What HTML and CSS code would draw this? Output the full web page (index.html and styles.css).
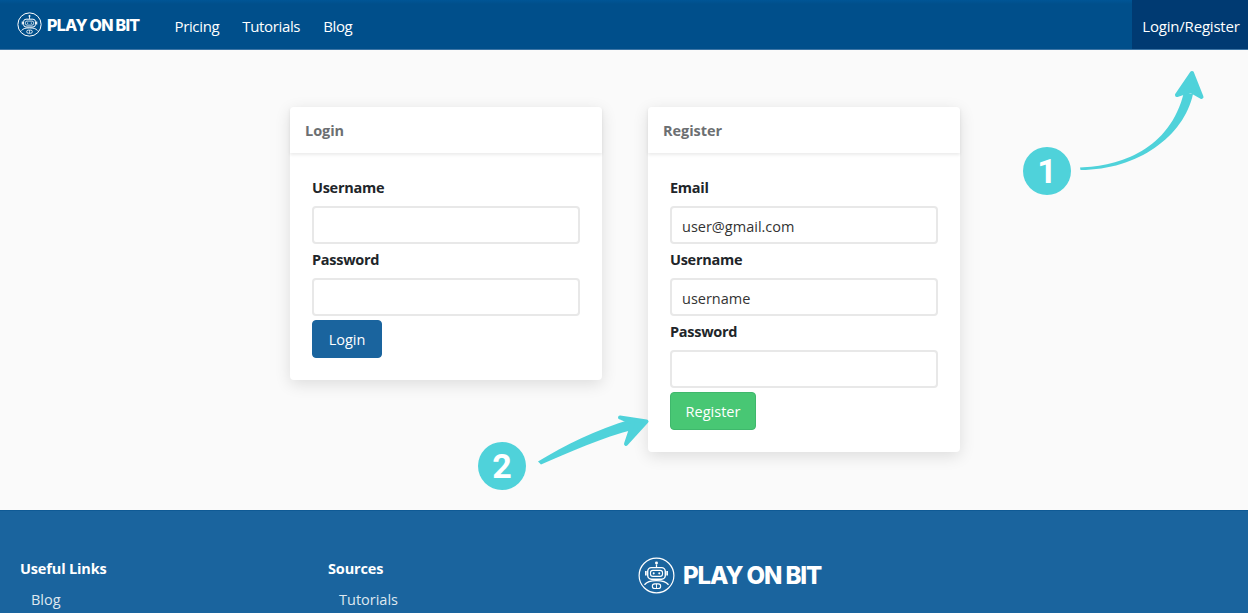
FILE: index.html
```html
<!DOCTYPE html>
<html lang="en">
<head>
<meta charset="utf-8">
<title>Play On Bit</title>
<link rel="stylesheet" href="styles.css">
</head>
<body>
<header class="topbar">
  <a class="brand" href="#">
    <svg class="robot robot-small" viewBox="0 0 40 40" aria-hidden="true">
      <circle cx="20" cy="20" r="18.6" fill="none" stroke="#fff" stroke-width="1.6"/>
      <circle cx="20" cy="6.5" r="1.6" fill="#fff"/>
      <path d="M20 8v3" stroke="#fff" stroke-width="1.4"/>
      <rect x="10.5" y="11.5" width="19" height="12.5" rx="4" fill="none" stroke="#fff" stroke-width="1.6"/>
      <rect x="13.5" y="14.5" width="13" height="6.5" rx="2.5" fill="none" stroke="#fff" stroke-width="1.3"/>
      <circle cx="17" cy="17.7" r="1.1" fill="#fff"/>
      <circle cx="23" cy="17.7" r="1.1" fill="#fff"/>
      <path d="M8.5 15v5M31.5 15v5" stroke="#fff" stroke-width="1.8"/>
      <path d="M7 30c3-4 7-4.5 13-4.5s10 .5 13 4.5" fill="none" stroke="#fff" stroke-width="1.5"/>
      <rect x="15.5" y="29" width="9" height="5" rx="2.5" fill="none" stroke="#fff" stroke-width="1.3"/>
      <path d="M20 29v5" stroke="#fff" stroke-width="1"/>
    </svg>
    <span class="wordmark">PLAY ON BIT</span>
  </a>
  <nav class="nav">
    <a href="#">Pricing</a>
    <a href="#">Tutorials</a>
    <a href="#">Blog</a>
  </nav>
  <a class="account" href="#">Login/Register</a>
</header>

<main class="content">
  <section class="card">
    <h2 class="card-title">Login</h2>
    <form class="card-body">
      <div class="field">
        <label for="login-user">Username</label>
        <input id="login-user" type="text">
      </div>
      <div class="field">
        <label for="login-pass">Password</label>
        <input id="login-pass" type="password">
      </div>
      <button class="btn btn-blue" type="button">Login</button>
    </form>
  </section>

  <section class="card">
    <h2 class="card-title">Register</h2>
    <form class="card-body">
      <div class="field">
        <label for="reg-email">Email</label>
        <input id="reg-email" type="text" value="user@gmail.com">
      </div>
      <div class="field">
        <label for="reg-user">Username</label>
        <input id="reg-user" type="text" value="username">
      </div>
      <div class="field">
        <label for="reg-pass">Password</label>
        <input id="reg-pass" type="password">
      </div>
      <button class="btn btn-green" type="button">Register</button>
    </form>
  </section>
</main>

<footer class="footer">
  <div class="footer-col">
    <h3>Useful Links</h3>
    <a href="#">Blog</a>
  </div>
  <div class="footer-col">
    <h3>Sources</h3>
    <a href="#">Tutorials</a>
  </div>
  <div class="footer-brand">
    <svg class="robot robot-large" viewBox="0 0 40 40" aria-hidden="true">
      <circle cx="20" cy="20" r="18.8" fill="none" stroke="#fff" stroke-width="1.3"/>
      <circle cx="20" cy="6.5" r="1.6" fill="#fff"/>
      <path d="M20 8v3" stroke="#fff" stroke-width="1.4"/>
      <rect x="10.5" y="11.5" width="19" height="12.5" rx="4" fill="none" stroke="#fff" stroke-width="1.5"/>
      <rect x="13.5" y="14.5" width="13" height="6.5" rx="2.5" fill="none" stroke="#fff" stroke-width="1.2"/>
      <circle cx="17" cy="17.7" r="1.1" fill="#fff"/>
      <circle cx="23" cy="17.7" r="1.1" fill="#fff"/>
      <path d="M8.5 15v5M31.5 15v5" stroke="#fff" stroke-width="1.8"/>
      <path d="M7 30c3-4 7-4.5 13-4.5s10 .5 13 4.5" fill="none" stroke="#fff" stroke-width="1.4"/>
      <rect x="15.5" y="29" width="9" height="5" rx="2.5" fill="none" stroke="#fff" stroke-width="1.2"/>
      <path d="M20 29v5" stroke="#fff" stroke-width="1"/>
    </svg>
    <span class="wordmark wordmark-large">PLAY ON BIT</span>
  </div>
</footer>

<svg class="arrows" viewBox="0 0 1248 613" aria-hidden="true">
  <path class="arrow" d="M1080 167.5C1120 166 1170 150 1184 92L1193 94C1184 136 1138 170 1080.5 170Z"/>
  <path class="arrow-head" d="M1192 73L1201.5 97L1190 90.5L1177 95Z"/>
  <path class="arrow" d="M538 461.5C565 445 595 430 632 419L636 429C600 438 570 452 541 464.5Z"/>
  <path class="arrow-head" d="M646.5 421.5L620 417.5L633 423L626 444Z"/>
</svg>
<div class="step step-one">1</div>
<div class="step step-two">2</div>
</body>
</html>
```
FILE: styles.css
```css
* { box-sizing: border-box; }

html, body { margin: 0; height: 100%; }

body {
  position: relative;
  height: 613px;
  overflow: hidden;
  display: flex;
  flex-direction: column;
  background: #fafafa;
  color: #212529;
  font-family: "Open Sans", "Noto Sans", sans-serif;
  font-size: 15px;
}

a { color: inherit; text-decoration: none; }

.topbar {
  flex: none;
  height: 50px;
  display: flex;
  align-items: stretch;
  padding-left: 17px;
  background: linear-gradient(#005596 0, #004f8b 4px);
  border-bottom: 1px solid #3d75a5;
  color: #fff;
}

.brand { display: flex; align-items: center; gap: 5px; }

.robot { display: block; flex: none; }
.robot-small { width: 25px; height: 25px; }
.robot-large { width: 37px; height: 37px; }

.wordmark {
  font-family: Inter, "Liberation Sans", sans-serif;
  font-weight: 800;
  font-size: 16px;
  line-height: 20px;
  letter-spacing: -0.7px;
  color: #fff;
  white-space: nowrap;
}

.wordmark-large { font-size: 24px; line-height: 28px; letter-spacing: -1.1px; }

.nav {
  display: flex;
  align-items: center;
  gap: 23px;
  margin-left: 35px;
  padding-top: 2px;
  font-size: 15px;
  letter-spacing: -0.35px;
}

.account {
  margin-left: auto;
  width: 116px;
  padding: 2px 0 0 2px;
  display: flex;
  align-items: center;
  justify-content: center;
  background: #003a72;
  font-size: 15px;
  letter-spacing: -0.2px;
}

.content {
  flex: none;
  height: 460px;
  display: flex;
  justify-content: center;
  align-items: flex-start;
  gap: 46px;
  padding: 57px 0 0 2px;
}

.card {
  width: 312px;
  background: #fff;
  border-radius: 4px;
  box-shadow: 0 4px 16px rgba(0, 0, 0, 0.12);
}

.card-title {
  margin: 0;
  height: 46px;
  padding: 0 15px;
  display: flex;
  align-items: center;
  font-size: 14.5px;
  font-weight: 700;
  letter-spacing: -0.05px;
  color: #6c6f72;
  box-shadow: 0 2px 3px rgba(0, 0, 0, 0.08);
}

.card-body {
  padding: 25px 22px 22px;
  display: flex;
  flex-direction: column;
  align-items: flex-start;
}

.field { width: 100%; display: flex; flex-direction: column; }
.field + .field { margin-top: 6px; }

.field label {
  font-size: 14.5px;
  line-height: 20px;
  font-weight: 700;
  letter-spacing: -0.28px;
  margin-bottom: 8px;
  color: #212529;
}

.field input {
  width: 100%;
  height: 38px;
  padding: 2px 10px 0;
  border: 2px solid #e8e8e8;
  border-radius: 4px;
  background: #fff;
  color: #333;
  font: inherit;
  font-size: 14.5px;
  outline: none;
}

.btn {
  margin-top: 4px;
  height: 38px;
  border-radius: 4px;
  color: #fff;
  font: inherit;
  font-size: 14.5px;
}

.btn-blue {
  width: 70px;
  border: 1px solid #1a649e;
  background: #1a649e;
}

.btn-green {
  width: 86px;
  border: 1px solid #3fb86c;
  background: #48c774;
}

.footer {
  flex: 1;
  display: grid;
  grid-template-columns: 308px 308px 1fr;
  padding: 48px 20px 0;
  background: #1a649e;
  border-top: 1px solid #0f5a95;
  color: #fff;
}

.footer-col { display: flex; flex-direction: column; align-items: flex-start; }

.footer-col h3 {
  margin: 0 0 11px;
  font-size: 14.5px;
  line-height: 20px;
  font-weight: 700;
  letter-spacing: -0.15px;
}

.footer-col a {
  margin-left: 11px;
  font-size: 14.5px;
  line-height: 20px;
  color: #dfe8f0;
}

.footer-brand {
  display: flex;
  align-items: center;
  align-self: start;
  gap: 8px;
  margin: -2px 0 0 2px;
}

.arrows {
  position: absolute;
  left: 0;
  top: 0;
  width: 1248px;
  height: 613px;
  pointer-events: none;
}

.arrow { fill: #4fd2da; }

.arrow-head {
  fill: #4fd2da;
  stroke: #4fd2da;
  stroke-width: 4;
  stroke-linejoin: round;
}

.step {
  position: absolute;
  width: 48px;
  height: 48px;
  border-radius: 50%;
  background: #4fd2da;
  color: #fff;
  display: flex;
  align-items: center;
  justify-content: center;
  font-family: Roboto, "Liberation Sans", sans-serif;
  font-weight: 700;
  font-size: 34px;
  line-height: 1;
}

.step-one { left: 1023px; top: 147px; }
.step-two { left: 478px; top: 442px; }
```
